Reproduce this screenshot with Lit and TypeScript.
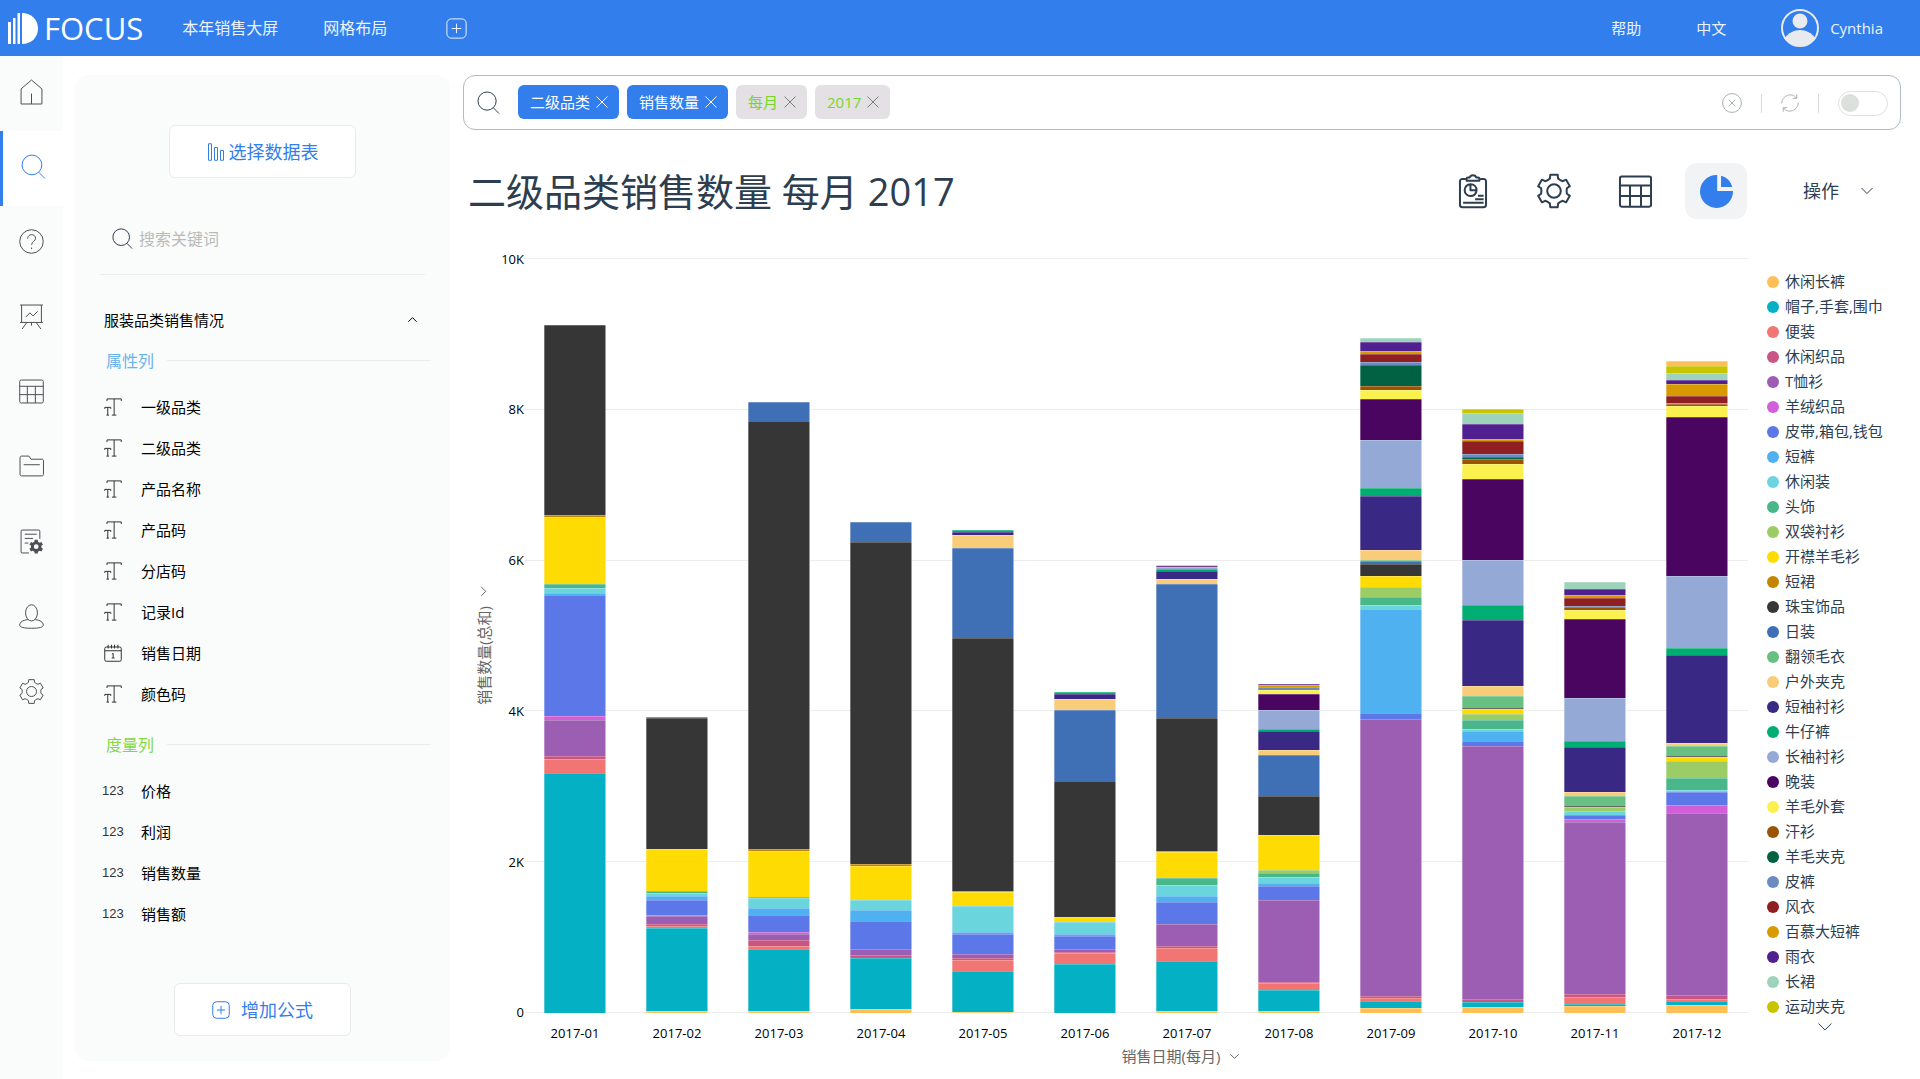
import { LitElement, html, css, svg, SVGTemplateResult } from "lit";
import { customElement, property, state } from "lit/decorators.js";
import { classMap } from "lit/directives/class-map.js";
import { styleMap } from "lit/directives/style-map.js";

/* ---------- icons ---------- */

/** Outline of a six-toothed cog centred on (c, c). */
function cog(c: number, outer: number, inner: number): string {
  const at = (r: number, deg: number) => {
    const a = ((deg - 90) * Math.PI) / 180;
    return `${(c + r * Math.cos(a)).toFixed(2)} ${(c + r * Math.sin(a)).toFixed(2)}`;
  };
  let d = "";
  for (let i = 0; i < 6; i++) {
    const t = i * 60;
    d += `${i ? "L" : "M"}${at(outer, t - 13)}L${at(outer, t + 13)}L${at(inner, t + 18)}`;
    d += `Q${at(inner * 0.93, t + 30)} ${at(inner, t + 42)}`;
  }
  return d + "Z";
}

const icons: Record<string, SVGTemplateResult> = {
  home: svg`<path d="M2 9.500 12 1l10 8.500V24H2Z"/><path d="M12 14v10"/>`,
  search: svg`<circle cx="10.500" cy="10.500" r="9.500"/><path d="m17 17.500 6 6"/>`,
  help: svg`<circle cx="12" cy="12" r="11.300"/><path d="M8.300 9.300c0-5.200 7.600-5 7.600-.4 0 3-3.800 3-3.800 6.300"/><path d="M12.100 17.800v1.600"/>`,
  board: svg`<path d="M1 1h22M2.500 1v16.500M21.500 1v16.500M1 17.700h22M7.500 17.700 3 24M16.500 17.700 21 24M12 17.700v3"/><path d="m6.500 12.500 4-4 3 3 4.500-4.500"/>`,
  grid: svg`<rect x=".7" y="1" width="22.600" height="22" rx="1.500"/><path d="M.7 7h22.600M.7 15h22.600M8 7v16M15.700 7v16"/>`,
  folder: svg`<path d="M1 3.500C1 2.500 1.500 2 2.500 2h7l2 3H22c1 0 1.500.5 1.500 1.500v13c0 1-.5 1.500-1.500 1.500H2.500C1.500 21 1 20.500 1 19.500Z"/><path d="M4.500 10.300h15.500"/>`,
  doc: svg`<path d="M9.500 23H3c-.7 0-1-.3-1-1V2c0-.7.300-1 1-1h16c.7 0 1 .3 1 1v7.500M5.500 5h11.500M5.500 9h8M5.500 13.500h3.500"/><path fill="currentColor" stroke="none" fill-rule="evenodd" transform="translate(9.500 10)" d="${cog(7, 6.8, 5.2)}M7 4.700a2.300 2.300 0 1 0 0 4.600 2.300 2.300 0 0 0 0-4.600Z"/>`,
  user: svg`<ellipse cx="12" cy="8.500" rx="5.700" ry="7.800"/><path d="M8.500 15C3.500 15.500.7 17.500.7 20.300c0 2 4 3 11.300 3s11.300-1 11.300-3c0-2.800-2.800-4.800-7.800-5.300"/>`,
  gear: svg`<path d="${cog(12, 11.7, 9.3)}"/><circle cx="12" cy="12" r="4.800"/>`,
  plus: svg`<rect x="1" y="1" width="22" height="22" rx="5"/><path d="M12 6.500v11M6.500 12h11"/>`,
  bars: svg`<path d="M2 1h4v22H2ZM10 6h4v17h-4ZM18 10h4v13h-4Z"/>`,
  text: svg`<path d="M4 4V1.200h19V4M13.500 1.200v21.600M10.500 22.800h6M1 14.500v-2h8v2M5 12.500v10.300M3.300 22.800h3.400"/>`,
  date: svg`<rect x="1" y="4" width="22" height="19" rx="2"/><path d="M1 9h22M5.500 1v5M10 1v5M14 1v5M18.500 1v5M10.500 13.500l1.700-1v6M10.300 18.700h3.800"/>`,
  close: svg`<path d="m1 1 22 22M23 1 1 23"/>`,
  clear: svg`<circle cx="12" cy="12" r="11.300"/><path d="m8 8 8 8M16 8l-8 8"/>`,
  refresh: svg`<path d="M1 12.500C1 2 15-3 20.500 5.500M23 11.500C23 22 9 27 3.500 18.500"/><path d="M21 .5v5.300h-5.300M3 23.500v-5.300h5.300"/>`,
  down: svg`<path d="m1 6 11 11L23 6"/>`,
  up: svg`<path d="m1 18 11-11 11 11"/>`,
  left: svg`<path d="m18 0-12 12 12 12"/>`,
  clipboard: svg`<path d="M7 3.500H4.500c-1 0-1.700.7-1.700 1.700v16.500c0 1 .7 1.700 1.700 1.700h15c1 0 1.700-.7 1.700-1.700V5.200c0-1-.7-1.700-1.700-1.700H17"/><path d="M7.500 4.800V3.300c0-.5.400-.8.900-.8h1.300C10.300.4 13.700.4 14.300 2.500h1.300c.5 0 .9.300.9.800v1.500Z"/><path d="M10.200 7.200a4.200 4.200 0 1 0 4.300 4.300h-4.300ZM10.200 7.200c2.600 0 4.300 1.900 4.300 4.300M15.500 15.300h4M13.500 17.800h6M5 20.300h14.500"/>`,
  sheet: svg`<rect x=".7" y="1" width="22.600" height="22" rx="1.300"/><path d="M.7 7.600h22.600M.7 15.300h22.600M8 7.600V23M16 7.600V23"/>`,
  pie: svg`<path fill="currentColor" stroke="none" d="M12 0a12 12 0 1 0 12 11.600H12.500V0ZM15.300.5V8.800h8.200A11.600 11.600 0 0 0 15.300.5Z"/>`,
};

@customElement("ui-icon")
export class UiIcon extends LitElement {
  @property() name = "home";
  @property({ type: Number }) size = 24;
  @property({ type: Number }) weight = 1;

  static styles = css`
    :host { display: inline-flex; flex: none; }
    .glyph { display: block; fill: none; stroke: currentColor; stroke-linejoin: round; overflow: visible; }
  `;

  render() {
    return html`<svg class="glyph" viewBox="0 0 24 24" width=${this.size} height=${this.size}
      stroke-width=${(this.weight * 24) / this.size} aria-hidden="true">${icons[this.name]}</svg>`;
  }
}

/* ---------- chart data ---------- */

const SERIES: [string, string][] = [
  ["休闲长裤", "#ffbf56"],
  ["帽子,手套,围巾", "#04b1c4"],
  ["便装", "#f07573"],
  ["休闲织品", "#c85583"],
  ["T恤衫", "#9c5eb2"],
  ["羊绒织品", "#d160d8"],
  ["皮带,箱包,钱包", "#5c77e8"],
  ["短裤", "#50b1f0"],
  ["休闲装", "#6ad5dc"],
  ["头饰", "#4ab78b"],
  ["双袋衬衫", "#9ccc66"],
  ["开襟羊毛衫", "#ffdb04"],
  ["短裙", "#c38500"],
  ["珠宝饰品", "#363636"],
  ["日装", "#3f6fb4"],
  ["翻领毛衣", "#68bf82"],
  ["户外夹克", "#f9cc79"],
  ["短袖衬衫", "#392884"],
  ["牛仔裤", "#00ae72"],
  ["长袖衬衫", "#94a9d6"],
  ["晚装", "#49055f"],
  ["羊毛外套", "#faf04e"],
  ["汗衫", "#9b5404"],
  ["羊毛夹克", "#006242"],
  ["皮裤", "#6d8ac0"],
  ["风衣", "#8f1f20"],
  ["百慕大短裤", "#d79b00"],
  ["雨衣", "#501f90"],
  ["长裙", "#9cd3ba"],
  ["运动夹克", "#c8c400"],
];

/** Quantity sold per month, listed from the base of the stack upwards as [series, quantity]. */
const MONTHS: [string, [number, number][]][] = [
  ["2017-01", [[1, 3176], [2, 186], [3, 44], [4, 473], [5, 53], [6, 1599], [7, 27], [8, 76], [9, 49], [11, 892], [12, 27], [13, 2514]]],
  ["2017-02", [[0, 22], [1, 1100], [2, 35], [3, 27], [4, 102], [5, 13], [6, 203], [7, 53], [8, 40], [9, 18], [11, 557], [13, 1741], [14, 13]]],
  ["2017-03", [[0, 22], [1, 831], [2, 35], [3, 80], [4, 80], [5, 31], [6, 225], [7, 93], [8, 124], [9, 13], [11, 614], [12, 20], [13, 5671], [14, 256]]],
  ["2017-04", [[0, 59], [1, 666], [3, 39], [4, 83], [6, 367], [7, 147], [8, 137], [11, 455], [12, 20], [13, 4272], [14, 259]]],
  ["2017-05", [[0, 14], [1, 543], [2, 147], [3, 24], [4, 59], [6, 265], [7, 24], [8, 342], [11, 181], [12, 14], [13, 3357], [14, 1194], [16, 162], [17, 44], [18, 30]]],
  ["2017-06", [[1, 646], [2, 147], [3, 14], [4, 44], [6, 172], [7, 30], [8, 152], [11, 63], [13, 1806], [14, 935], [16, 147], [17, 73], [18, 24]]],
  ["2017-07", [[0, 30], [1, 656], [2, 176], [3, 20], [4, 294], [6, 289], [7, 83], [8, 142], [9, 97], [11, 342], [12, 14], [13, 1767], [14, 1771], [16, 73], [17, 103], [18, 30], [19, 20], [20, 14], [28, 12]]],
  ["2017-08", [[0, 27], [1, 278], [2, 88], [3, 13], [4, 1096], [6, 177], [7, 44], [8, 84], [9, 44], [10, 40], [11, 473], [13, 508], [14, 543], [16, 75], [17, 239], [18, 31], [19, 256], [20, 212], [21, 49], [22, 18], [24, 20], [26, 27], [27, 15]]],
  ["2017-09", [[0, 62], [1, 97], [2, 35], [3, 31], [4, 3663], [6, 84], [7, 1383], [8, 53], [9, 102], [10, 137], [11, 146], [13, 159], [14, 31], [15, 22], [16, 128], [17, 720], [18, 102], [19, 636], [20, 548], [21, 110], [22, 49], [23, 283], [24, 35], [25, 110], [26, 40], [27, 128], [28, 53]]],
  ["2017-10", [[0, 84], [1, 57], [3, 40], [4, 3349], [6, 71], [7, 133], [8, 31], [9, 110], [10, 88], [11, 57], [13, 22], [15, 155], [16, 133], [17, 875], [18, 199], [19, 596], [20, 1078], [21, 194], [22, 66], [23, 31], [24, 31], [25, 177], [26, 22], [27, 208], [28, 146], [29, 53]]],
  ["2017-11", [[0, 93], [1, 31], [2, 88], [3, 40], [4, 2284], [5, 27], [6, 57], [8, 49], [10, 53], [13, 18], [15, 133], [16, 49], [17, 601], [18, 75], [19, 579], [20, 1043], [21, 124], [22, 27], [24, 22], [25, 106], [26, 31], [27, 84], [28, 97]]],
  ["2017-12", [[0, 110], [1, 44], [2, 31], [3, 53], [4, 2417], [5, 97], [6, 172], [8, 31], [9, 163], [10, 221], [11, 49], [13, 18], [15, 128], [16, 44], [17, 1158], [18, 93], [19, 959], [20, 2107], [21, 150], [22, 22], [24, 13], [25, 97], [26, 155], [27, 53], [28, 97], [29, 88], [0, 66]]],
];

const AXIS_MAX = 10000;
const TICKS = ["10K", "8K", "6K", "4K", "2K", "0"];

@customElement("sales-chart")
export class SalesChart extends LitElement {
  static styles = css`
    :host {
      display: grid;
      grid-template-columns: 30px 31px minmax(0, 1fr) 134px;
      grid-template-rows: minmax(0, 1fr) 31px 24px;
      font-size: 13px;
      color: #000;
    }
    ul { list-style: none; margin: 0; padding: 0; }
    button { border: 0; background: none; padding: 0; font: inherit; color: inherit; cursor: pointer; }
    .y-title {
      grid-area: 1 / 1;
      align-self: center;
      justify-self: end;
      display: flex;
      align-items: center;
      gap: 10px;
      writing-mode: vertical-rl;
      text-orientation: sideways;
      transform: rotate(180deg);
      font-size: 15px;
      line-height: 18px;
      color: #666;
      margin-top: 20px;
    }
    .y-ticks { grid-area: 1 / 2; display: flex; flex-direction: column; justify-content: space-between; }
    .y-tick { height: 1px; display: flex; align-items: center; justify-content: flex-end; line-height: 18px; }
    .lines { grid-area: 1 / 3; display: flex; flex-direction: column; justify-content: space-between; }
    .line { height: 1px; background: #ececee; }
    .bars { grid-area: 1 / 3; display: flex; }
    .slot { flex: 1 1 0; display: flex; flex-direction: column; align-items: center; }
    .lines, .bars, .x-labels { margin-right: 19px; }
    .segment {
      width: 61%;
      flex-basis: 0;
      box-shadow: inset 1px 0 rgba(255, 255, 255, 0.3), inset -1px 0 rgba(255, 255, 255, 0.5),
        inset 0 1px rgba(255, 255, 255, 0.25);
    }
    .x-labels { grid-area: 2 / 3; display: flex; }
    .x-label { flex: 1 1 0; text-align: center; padding-top: 10px; line-height: 20px; }
    .x-title {
      grid-area: 3 / 1 / 4 / 5;
      justify-self: center;
      display: flex;
      align-items: center;
      gap: 10px;
      font-size: 15px;
      line-height: 24px;
      color: #666;
      margin-right: 3px;
    }
    .legend { grid-area: 1 / 4 / 4 / 5; padding-top: 11px; display: flex; flex-direction: column; }
    .entry { display: flex; align-items: center; gap: 6px; height: 25px; font-size: 15px; line-height: 25px; color: #2c3e50; white-space: nowrap; }
    .dot { width: 12px; height: 12px; border-radius: 50%; flex: none; }
    .more { display: flex; justify-content: center; height: 16px; align-items: center; color: #2c3e50; margin-right: 18px; }
  `;

  render() {
    return html`
      <button class="y-title">销售数量(总和)<ui-icon name="left" size="9"></ui-icon></button>
      <div class="y-ticks">${TICKS.map((t) => html`<div class="y-tick">${t}</div>`)}</div>
      <div class="lines">${TICKS.map(() => html`<div class="line"></div>`)}</div>
      <div class="bars">
        ${MONTHS.map(([month, stack]) => {
          const total = stack.reduce((sum, [, q]) => sum + q, 0);
          return html`<div class="slot" role="img" aria-label=${month}>
            <div style=${styleMap({ flexGrow: String(AXIS_MAX - total) })}></div>
            ${[...stack].reverse().map(([s, q]) => html`<div class="segment"
              style=${styleMap({ flexGrow: String(q), backgroundColor: SERIES[s][1] })}></div>`)}
          </div>`;
        })}
      </div>
      <div class="x-labels">${MONTHS.map(([month]) => html`<div class="x-label">${month}</div>`)}</div>
      <button class="x-title">销售日期(每月)<ui-icon name="down" size="9"></ui-icon></button>
      <div class="legend">
        <ul>
          ${SERIES.map(([name, color]) => html`<li class="entry">
            <span class="dot" style=${styleMap({ backgroundColor: color })}></span>${name}</li>`)}
        </ul>
        <button class="more" aria-label="更多图例"><ui-icon name="down" size="14"></ui-icon></button>
      </div>
    `;
  }
}

/* ---------- data panel ---------- */

@customElement("data-panel")
export class DataPanel extends LitElement {
  @state() private open = true;

  private fields: [string, string][] = [
    ["text", "一级品类"], ["text", "二级品类"], ["text", "产品名称"], ["text", "产品码"],
    ["text", "分店码"], ["text", "记录Id"], ["date", "销售日期"], ["text", "颜色码"],
  ];
  private measures = ["价格", "利润", "销售数量", "销售额"];

  static styles = css`
    :host {
      display: flex;
      flex-direction: column;
      box-sizing: border-box;
      width: 375px;
      padding: 50px 19px 25px 25px;
      border-radius: 13px;
      background: #fafcfb;
      font-size: 15px;
      color: #000;
    }
    ul { list-style: none; margin: 0; padding: 0; }
    button { font: inherit; color: inherit; cursor: pointer; }
    .action {
      display: flex;
      align-items: center;
      justify-content: center;
      align-self: center;
      box-sizing: border-box;
      height: 53px;
      margin-right: 6px;
      border: 1px solid #e9ebec;
      border-radius: 6px;
      background: #fff;
      color: #327eed;
      font-size: 18px;
      line-height: 26px;
    }
    .choose { width: 187px; gap: 4px; }
    .add { width: 177px; gap: 11px; margin-top: auto; }
    .find {
      display: flex;
      align-items: center;
      gap: 6px;
      height: 71px;
      margin: 25px 6px 0 0;
      padding-left: 12px;
      border-bottom: 1px solid #e9ebec;
      color: #2c3e50;
    }
    .field { flex: 1; min-width: 0; border: 0; outline: 0; padding: 0; background: none; font: inherit; font-size: 16px; line-height: 24px; }
    .field::placeholder { color: #b9bbba; opacity: 1; }
    .source {
      display: flex;
      align-items: center;
      justify-content: space-between;
      height: 42px;
      margin: 23px 14px 0 4px;
      padding: 0;
      border: 0;
      background: none;
    }
    .group { display: flex; align-items: center; gap: 13px; height: 41px; padding-left: 6px; font-size: 16px; line-height: 24px; }
    .group::after { content: ""; flex: 1; height: 1px; background: #e9ebec; }
    .attribute { color: #6ab2ea; }
    .measure { color: #84d93c; margin-top: 10px; }
    .list { padding-top: 5px; }
    .item { display: flex; align-items: center; height: 41px; padding-left: 4px; line-height: 22px; }
    .kind { width: 37px; display: flex; color: #333; }
    .digits { font-family: "Liberation Sans", sans-serif; font-size: 13px; margin-left: -2px; padding-top: 1px; }
  `;

  render() {
    return html`
      <button class="action choose"><ui-icon name="bars" size="18"></ui-icon>选择数据表</button>
      <label class="find">
        <ui-icon name="search" size="21"></ui-icon>
        <input class="field" type="search" placeholder="搜索关键词" aria-label="搜索关键词" />
      </label>
      <button class="source" aria-expanded=${this.open} @click=${() => (this.open = !this.open)}>
        服装品类销售情况<ui-icon name=${this.open ? "up" : "down"} size="9"></ui-icon>
      </button>
      ${this.open ? html`
        <div class="group attribute">属性列</div>
        <ul class="list">
          ${this.fields.map(([kind, name]) => html`<li class="item">
            <span class="kind"><ui-icon name=${kind} size="18"></ui-icon></span>${name}</li>`)}
        </ul>
        <div class="group measure">度量列</div>
        <ul class="list">
          ${this.measures.map((name) => html`<li class="item">
            <span class="kind"><span class="digits">123</span></span>${name}</li>`)}
        </ul>` : ""}
      <button class="action add"><ui-icon name="plus" size="18"></ui-icon>增加公式</button>
    `;
  }
}

/* ---------- page ---------- */

@customElement("app-root")
export class AppRoot extends LitElement {
  @state() private tags = [
    { text: "二级品类", solid: true },
    { text: "销售数量", solid: true },
    { text: "每月", solid: false },
    { text: "2017", solid: false },
  ];

  private rail: [string, string][] = [
    ["home", "首页"], ["search", "搜索"], ["help", "问答"], ["board", "看板"], ["grid", "数据表"],
    ["folder", "资源"], ["doc", "数据管理"], ["user", "用户"], ["gear", "设置"],
  ];

  static styles = css`
    :host {
      display: flex;
      flex-direction: column;
      min-height: 100vh;
      background: #fff;
      font-family: "Open Sans", "Noto Sans CJK SC", sans-serif;
      font-size: 15px;
      color: #2c3e50;
    }
    button { border: 0; background: none; padding: 0; font: inherit; color: inherit; cursor: pointer; }
    a { color: inherit; text-decoration: none; }

    .top { display: flex; align-items: center; height: 56px; padding: 0 37px 0 8px; background: #327eed; color: #edf3fd; }
    .brand { display: flex; align-items: center; gap: 6px; color: #fff; font-size: 31px; line-height: 40px; }
    .mark { fill: #fff; display: block; }
    .nav { display: flex; align-items: center; gap: 45px; margin-left: 39px; font-size: 16px; line-height: 24px; }
    .new-tab { display: flex; margin-left: 14px; }
    .account { display: flex; align-items: center; margin-left: auto; line-height: 22px; }
    .lang { margin-left: 55px; }
    .me { display: flex; align-items: center; gap: 11px; margin-left: 55px; }

    .body { flex: 1; display: flex; }
    .rail { flex: none; width: 63px; background: #fafcfb; color: #4c5053; }
    .rail-item { display: flex; align-items: center; justify-content: center; box-sizing: border-box; width: 100%; height: 75px; padding-bottom: 4px; }
    .rail-item.active { background: #fff; color: #327eed; border-left: 3px solid #327eed; }
    .panel { flex: none; margin: 19px 13px 18px 12px; }

    .main { flex: 1; min-width: 0; display: flex; flex-direction: column; padding: 19px 19px 11px 0; }
    .query { display: flex; align-items: center; gap: 8px; box-sizing: border-box; height: 55px; padding: 0 12px 1px 13px; border: 1px solid #b1bac9; border-radius: 12px; }
    .lens { display: flex; margin-right: 10px; }
    .tag { display: flex; align-items: center; gap: 6px; box-sizing: border-box; height: 34px; padding: 0 11px 0 12px; border-radius: 6px; line-height: 22px; background: #e3e1e4; color: #77d62a; }
    .tag.solid { background: #327eed; color: #fff; }
    .drop { display: flex; color: #7d7d80; }
    .solid .drop { color: #fff; }
    .entry { flex: 1; min-width: 0; border: 0; outline: 0; background: none; font: inherit; color: inherit; }
    .tools { display: flex; align-items: center; gap: 19px; padding-top: 2px; }
    .tool { display: flex; color: #a9b1ad; }
    .rule { width: 1px; height: 19px; background: #d5dad8; }
    .switch {
      appearance: none;
      display: flex;
      align-items: center;
      box-sizing: border-box;
      width: 50px;
      height: 25px;
      margin: 0;
      padding: 0 2px;
      border: 1px solid #dde1df;
      border-radius: 13px;
      background: #fff;
    }
    .switch::before { content: ""; width: 18px; height: 18px; border-radius: 50%; background: #dbe0dd; }
    .switch:checked { justify-content: flex-end; }

    .head { display: flex; align-items: center; height: 56px; margin: 33px 28px 39px 5px; }
    .title { flex: 1; margin: 0; font-size: 38px; font-weight: 400; line-height: 56px; }
    .views { display: flex; align-items: center; gap: 19px; color: #2c3e50; }
    .view { display: flex; align-items: center; justify-content: center; width: 62px; height: 56px; border-radius: 12px; }
    .view.active { background: #f1f3f5; color: #327eed; }
    .ops { display: flex; align-items: center; gap: 22px; margin-left: 56px; font-size: 18px; line-height: 26px; }
    .chart { flex: 1; }
  `;

  private removeTag(index: number) {
    this.tags = this.tags.filter((_, i) => i !== index);
  }

  render() {
    return html`
      <header class="top">
        <a class="brand" href="#">
          <svg class="mark" width="30" height="31" viewBox="0 0 30 31" aria-hidden="true">
            <path d="M0 9h3v22H0ZM5 5h2.500v26H5ZM9.500 0H12v31H9.500ZM14 0c9.500 0 16 6.500 16 15.500S23.500 31 14 31Z" />
          </svg>
          FOCUS
        </a>
        <nav class="nav">
          <a href="#">本年销售大屏</a>
          <a href="#">网格布局</a>
          <button class="new-tab" aria-label="新建"><ui-icon name="plus" size="21"></ui-icon></button>
        </nav>
        <div class="account">
          <a href="#">帮助</a>
          <a class="lang" href="#">中文</a>
          <a class="me" href="#">
            <svg width="38" height="38" viewBox="0 0 38 38" fill="#e9eaee" aria-hidden="true">
              <circle cx="19" cy="19" r="18" fill="none" stroke="#e9eaee" stroke-width="2" />
              <circle cx="19" cy="12" r="7.500" />
              <path d="M4 29c3-5 9-8 15-8s12 3 15 8a18.500 18.500 0 0 1-30 0Z" />
            </svg>
            Cynthia
          </a>
        </div>
      </header>
      <div class="body">
        <nav class="rail">
          ${this.rail.map(([icon, label]) => html`<button aria-label=${label}
            class=${classMap({ "rail-item": true, active: icon === "search" })}>
            <ui-icon name=${icon} size="25"></ui-icon></button>`)}
        </nav>
        <data-panel class="panel"></data-panel>
        <main class="main">
          <div class="query">
            <span class="lens"><ui-icon name="search" size="23"></ui-icon></span>
            ${this.tags.map((tag, i) => html`<span class=${classMap({ tag: true, solid: tag.solid })}>${tag.text}
              <button class="drop" aria-label="移除 ${tag.text}" @click=${() => this.removeTag(i)}>
                <ui-icon name="close" size="12"></ui-icon></button></span>`)}
            <input class="entry" type="text" aria-label="搜索" />
            <div class="tools">
              <button class="tool" aria-label="清空" @click=${() => (this.tags = [])}><ui-icon name="clear" size="20"></ui-icon></button>
              <span class="rule"></span>
              <button class="tool" aria-label="刷新"><ui-icon name="refresh" size="18"></ui-icon></button>
              <span class="rule"></span>
              <input class="switch" type="checkbox" aria-label="自动查询" />
            </div>
          </div>
          <div class="head">
            <h1 class="title">二级品类销售数量 每月 2017</h1>
            <div class="views">
              <button class="view" aria-label="详情"><ui-icon name="clipboard" size="34" weight="2"></ui-icon></button>
              <button class="view" aria-label="配置"><ui-icon name="gear" size="34" weight="2"></ui-icon></button>
              <button class="view" aria-label="表格"><ui-icon name="sheet" size="33" weight="2"></ui-icon></button>
              <button class="view active" aria-label="图形"><ui-icon name="pie" size="33"></ui-icon></button>
            </div>
            <button class="ops">操作<ui-icon name="down" size="12"></ui-icon></button>
          </div>
          <sales-chart class="chart"></sales-chart>
        </main>
      </div>
    `;
  }
}
